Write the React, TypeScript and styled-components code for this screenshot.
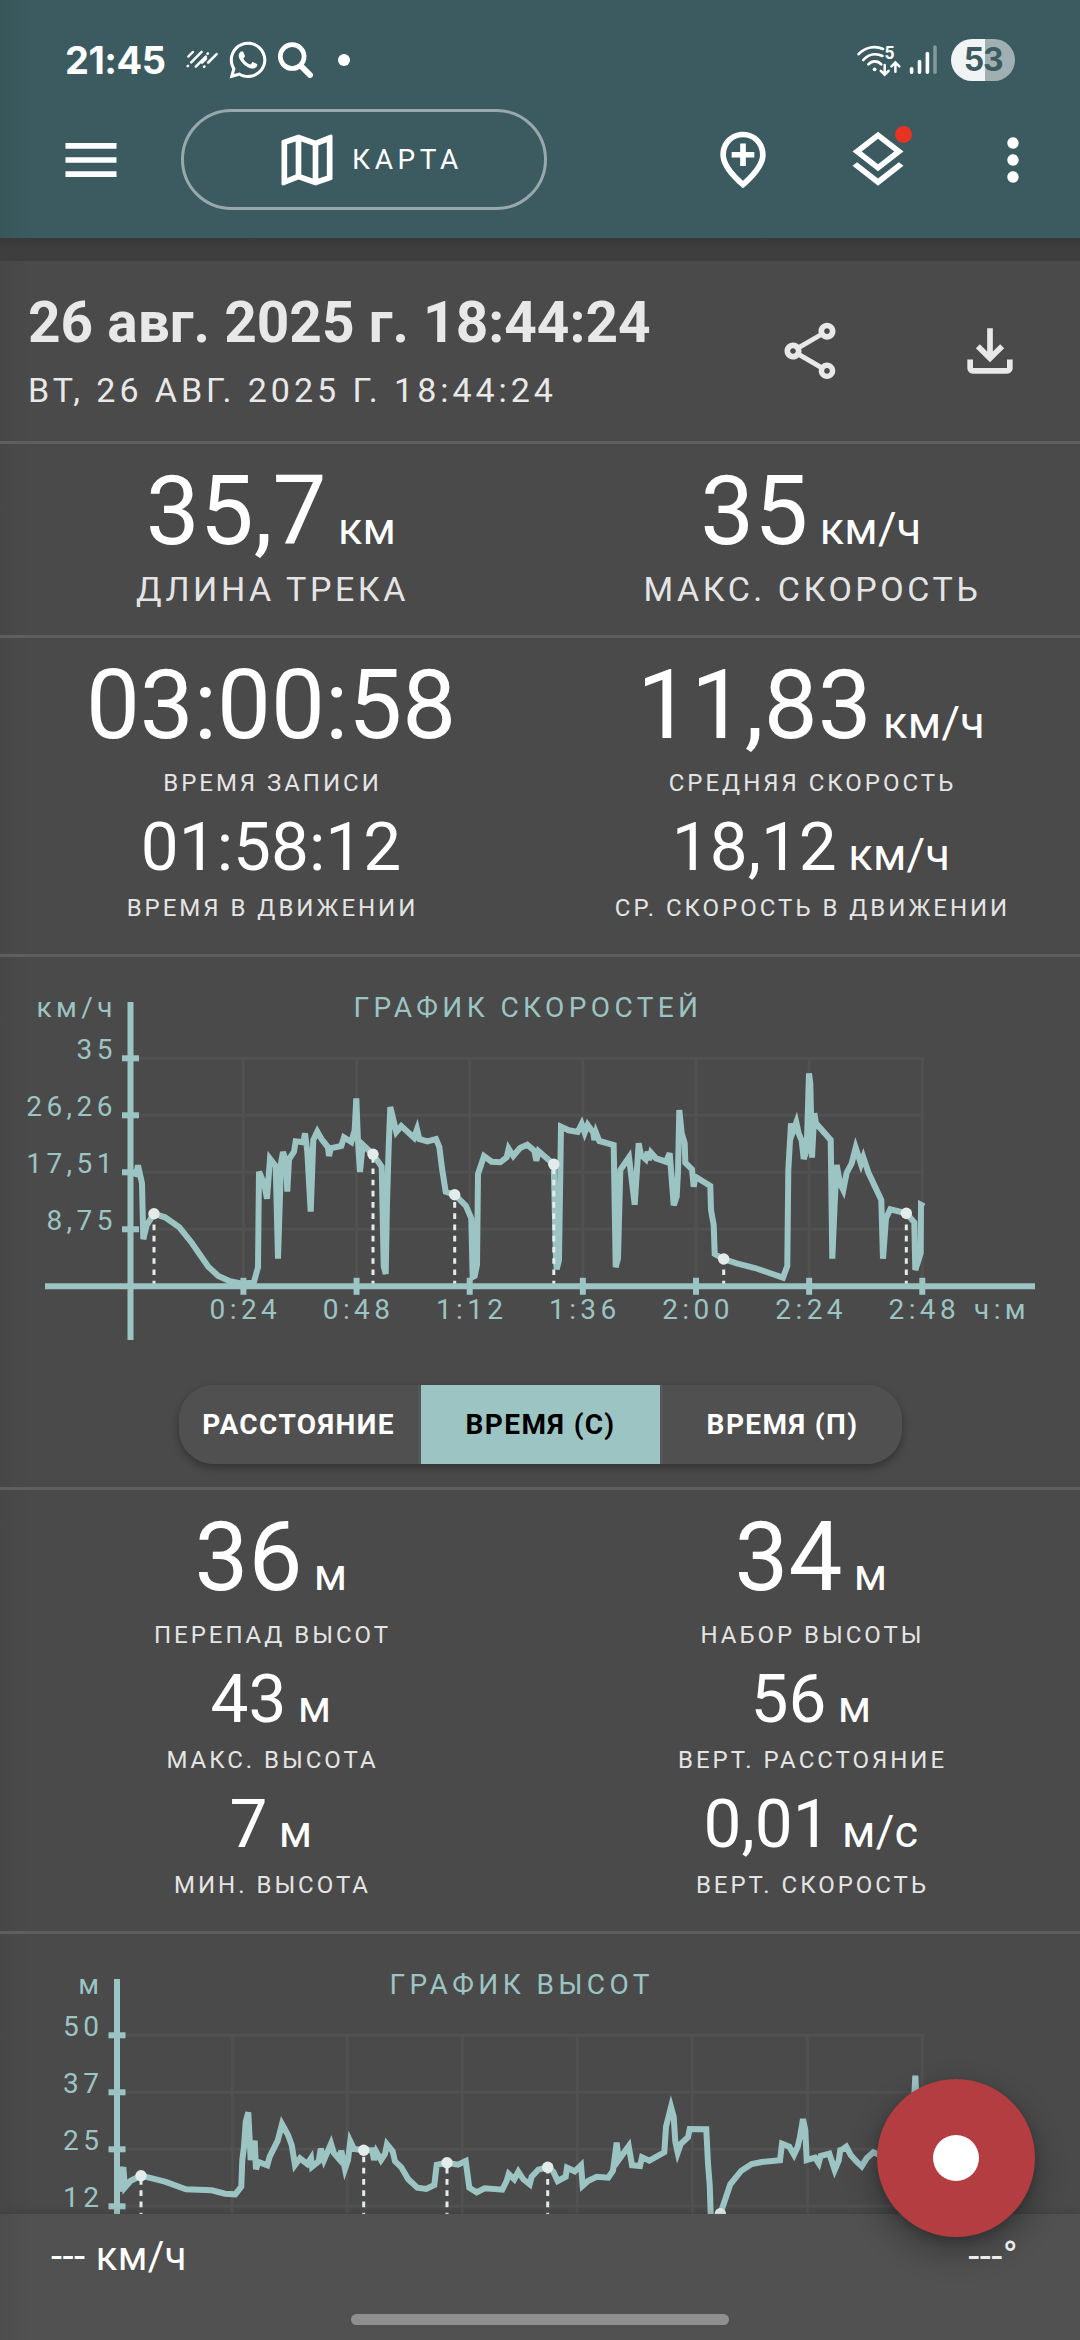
import React from "react";
import styled, { createGlobalStyle } from "styled-components";
import { FaWhatsapp } from "react-icons/fa";
import {
  MdMenu,
  MdMoreVert,
  MdOutlineFileDownload,
  MdOutlineLayers,
  MdOutlineMap,
  MdOutlineShare,
} from "react-icons/md";

const teal = "#9cc4c3";

const GlobalStyle = createGlobalStyle`
  *, *::before, *::after { box-sizing: border-box; }
  html, body { margin: 0; padding: 0; background: #4a4a4a; }
  body { font-family: Roboto, "Noto Sans", sans-serif; color: #fff; }
`;

const Screen = styled.div`
  position: relative;
  display: flex;
  flex-direction: column;
  width: 1080px;
  height: 2340px;
  overflow: hidden;
  background: #4a4a4a;
`;

/* ---------- header ---------- */

const Header = styled.header`
  flex: none;
  height: 238px;
  background: linear-gradient(90deg, #385659 0, #3b5b60 30px);
`;

const StatusBar = styled.div`
  display: flex;
  justify-content: space-between;
  align-items: center;
  height: 109px;
  padding: 11px 65px 0;
`;

const StatusGroup = styled.div`
  display: flex;
  align-items: center;
`;

const Clock = styled.span`
  margin-right: 20px;
  font: 700 38px/44px Inter, sans-serif;
  letter-spacing: -0.5px;
`;

const WhatsAppGlyph = styled(FaWhatsapp)`
  margin: 0 9px;
  font-size: 42px;
`;

const MoreDot = styled.span`
  width: 12px;
  height: 12px;
  margin-left: 24px;
  border-radius: 50%;
  background: #fff;
`;

const SignalSvg = styled.svg`
  margin: 0 14px 0 8px;
`;

const Battery = styled.span`
  display: flex;
  align-items: center;
  justify-content: center;
  width: 64px;
  height: 42px;
  border-radius: 21px;
  background: linear-gradient(90deg, #f0f4f5 53%, #9fafb2 53%);
  color: #3b5b60;
  font: 700 32px/42px Inter, sans-serif;
  letter-spacing: -1.4px;
`;

const Toolbar = styled.div`
  display: flex;
  align-items: center;
  height: 101px;
  padding: 0 33px 0 57px;
`;

const ToolbarActions = styled.div`
  display: flex;
  gap: 67px;
  margin-left: auto;
`;

const IconButton = styled.button`
  position: relative;
  display: flex;
  padding: 0;
  border: 0;
  background: none;
  color: inherit;
  font-size: 68px;
`;

const Badge = styled.span`
  position: absolute;
  top: 0;
  right: 0;
  width: 17px;
  height: 17px;
  border-radius: 50%;
  background: #e83323;
`;

const MapButton = styled.button`
  display: flex;
  align-items: center;
  justify-content: center;
  gap: 11px;
  width: 366px;
  height: 101px;
  margin-left: 56px;
  padding: 1px 0 0 8px;
  border: 3px solid #97a9ac;
  border-radius: 51px;
  background: none;
  color: #fff;
  font: 400 28px/34px Roboto, sans-serif;
  letter-spacing: 4.6px;

  svg {
    font-size: 68px;
  }
`;

/* ---------- content ---------- */

const Content = styled.main`
  flex: 1;
  min-height: 0;
  overflow: hidden;
  background: linear-gradient(90deg, #474747 0, #4a4a4a 30px);
`;

const TopShade = styled.div`
  height: 23px;
  background: linear-gradient(180deg, #393939, #3e3e3e 12px);
`;

const Section = styled.section<{ $height: number }>`
  height: ${(p) => p.$height}px;
  border-bottom: 3px solid #5f5f5f;
`;

const TrackHeader = styled(Section)`
  display: flex;
  align-items: center;
  padding: 1px 56px 0 28px;
  color: #e8e8e8;
`;

const TrackTitles = styled.div`
  flex: 1;
  padding-bottom: 1px;
`;

const TrackName = styled.h1`
  margin: 0 0 10px;
  font-size: 56.8px;
  font-weight: 700;
  line-height: 68px;
`;

const TrackDate = styled.div`
  font-size: 34px;
  line-height: 46px;
  letter-spacing: 3.95px;
`;

const TrackActions = styled.div`
  display: flex;
  gap: 112px;
  padding-bottom: 2px;
`;

const StatsGrid = styled(Section)`
  display: grid;
  grid-template-columns: 1fr 1fr;
  align-content: start;
  padding-top: 12px;
  text-align: center;
`;

const Stat = styled.div`
  display: flex;
  flex-direction: column;
  padding-left: 2px;
`;

const StatValue = styled.div<{ $large?: boolean }>`
  font-size: ${(p) => (p.$large ? 96 : 67.5)}px;
  line-height: ${(p) => (p.$large ? 110 : 93)}px;
  white-space: pre;
`;

const Unit = styled.span`
  font-size: 45px;
  line-height: 1;
  letter-spacing: 0.3px;
`;

const StatLabel = styled.div<{ $size: "large" | "small"; $gap: number }>`
  margin-top: ${(p) => p.$gap}px;
  padding-left: 3px;
  font-size: ${(p) => (p.$size === "large" ? 34 : 24)}px;
  line-height: ${(p) => (p.$size === "large" ? 46 : 34)}px;
  letter-spacing: ${(p) => (p.$size === "large" ? 3.55 : 2.98)}px;
  color: #e4e4e4;
  white-space: nowrap;
`;

const ChartSection = styled(Section)`
  display: flex;
  flex-direction: column;
  align-items: center;
`;

const ChartSvg = styled.svg`
  display: block;
  flex: none;

  text {
    fill: ${teal};
    font-family: Roboto, sans-serif;
    font-size: 28px;
    letter-spacing: 4.4px;
  }
`;

const Segmented = styled.div`
  display: flex;
  gap: 3px;
  width: 723px;
  height: 79px;
  margin-left: 1px;
  border-radius: 35px;
  overflow: hidden;
  background: #565656;
  box-shadow: 0 4px 9px rgba(0, 0, 0, 0.32);
`;

const Segment = styled.button<{ $active?: boolean }>`
  flex: 1 1 0;
  padding: 0;
  border: 0;
  background: ${(p) => (p.$active ? teal : "#505050")};
  color: ${(p) => (p.$active ? "#000" : "#fff")};
  font: 700 28px/34px Roboto, sans-serif;
  letter-spacing: 1.4px;
  white-space: nowrap;
`;

/* ---------- footer ---------- */

const BottomBar = styled.footer`
  display: flex;
  flex: none;
  flex-direction: column;
  justify-content: space-between;
  align-items: center;
  height: 126px;
  padding: 19px 0 15px;
  background: linear-gradient(90deg, #4d4d4d 0, #515151 30px);
  box-shadow: 0 -2px 6px rgba(0, 0, 0, 0.12);
`;

const Readouts = styled.div`
  position: relative;
  z-index: 2;
  display: flex;
  justify-content: space-between;
  width: 100%;
  padding: 0 62px 0 51px;
  font-size: 40px;
  line-height: 48px;
  letter-spacing: 0.4px;
`;

const Heading = styled.span`
  color: #ececec;
`;

const HomeIndicator = styled.div`
  width: 378px;
  height: 11px;
  border-radius: 6px;
  background: #8f8f8f;
`;

const RecordButton = styled.button`
  position: absolute;
  right: 45px;
  bottom: 103px;
  z-index: 1;
  display: flex;
  align-items: center;
  justify-content: center;
  width: 158px;
  height: 158px;
  border: 0;
  border-radius: 50%;
  background: #b33d41;
  box-shadow: 0 14px 32px rgba(0, 0, 0, 0.32), 0 3px 8px rgba(0, 0, 0, 0.16);
`;

const RecordDot = styled.span`
  width: 46px;
  height: 46px;
  border-radius: 50%;
  background: #fff;
`;

/* ---------- drawings ---------- */

const StripesIcon = () => (
  <svg width="32" height="20" viewBox="0 0 32 20" fill="none" stroke="#fff" strokeWidth="2.5" strokeLinecap="round">
    <path d="M2.4 6.5 6.8 2M5.2 12.4 15.6 1.9M1.7 16.1l.3-.3M9.8 16.6 19.8 6.6M21.5 3.8l.3-.3M16 12.6l4-4M18.1 16.8l.3-.3M22.2 12.5l8.4-8.4" />
  </svg>
);

const SearchIcon = () => (
  <svg width="36" height="36" viewBox="0 0 36 36" fill="none" stroke="#fff">
    <circle cx="14.2" cy="14.6" r="11.9" strokeWidth="4.7" />
    <path d="M23.5 24.5 32 33" strokeWidth="6" strokeLinecap="round" />
  </svg>
);

const WifiIcon = () => (
  <svg width="44" height="41" viewBox="0 -5 44 41" fill="none" stroke="#fff" strokeWidth="2.6" strokeLinecap="round">
    <path d="M1.6 9.2C8.5 1.8 18.5.6 26 4" />
    <path d="M6.3 15C11.7 9 19 8 25.5 11" />
    <path d="M11.3 19.4c3.8-4 9.3-4 13 0" />
    <circle cx="17.6" cy="24.3" r="1.9" fill="#fff" stroke="none" />
    <path d="M27.7 20v9M23.8 25.8l3.9 3.9 3.9-3.9M38.4 26.8v-9M34.5 21.3l3.9-3.9 3.9 3.9" strokeWidth="2.5" />
    <text x="27.6" y="14.2" fill="#fff" stroke="none" fontFamily="Roboto, sans-serif" fontWeight="700" fontSize="17.5">
      5
    </text>
  </svg>
);

const SignalIcon = () => (
  <SignalSvg width="28" height="30" viewBox="0 0 28 30" stroke="#fff" strokeWidth="3.6" strokeLinecap="round">
    <path d="M2.6 27.2v-3.4M10.5 27.2V16.6M18.4 27.2V8.6" />
    <path d="M26 27.2V2" stroke="#83989b" />
  </SignalSvg>
);

const AddPlaceIcon = () => (
  <svg width="1em" height="1em" viewBox="0 0 24 24" fill="currentColor">
    <path d="M12 4C8.65 4 6 6.57 6 10.2c0 2.34 1.95 5.44 6 9.14 4.05-3.7 6-6.8 6-9.14C18 6.57 15.35 4 12 4zm0-2c4.2 0 8 3.22 8 8.2 0 3.32-2.67 7.25-8 11.8-5.33-4.55-8-8.48-8-11.8C4 5.22 7.8 2 12 2z" />
    <path d="M13 6h-2v3H8v2h3v3h2v-3h3V9h-3z" transform="translate(0 .15)" />
  </svg>
);

/* ---------- charts ---------- */

type Point = [number, number];

interface ChartProps {
  title: string;
  titleX: number;
  unit: string;
  top: number;
  height: number;
  axisX: number;
  axisTop: number;
  axisY: number;
  yTicks: [string, number][];
  xStep: number;
  xTickCount: number;
  xLabels?: string[];
  xUnit?: string;
  series: Point[];
  markers: Point[];
}

const GRID_RIGHT = 922.3;

function Chart(p: ChartProps) {
  const xs = Array.from({ length: p.xTickCount }, (_, i) => GRID_RIGHT - (p.xTickCount - 1 - i) * p.xStep);
  const labelRight = p.axisX - 13.7;
  return (
    <ChartSvg width={1080} height={p.height} viewBox={`0 ${p.top} 1080 ${p.height}`}>
      <g stroke="#515151" strokeWidth={3}>
        {p.yTicks.map(([label, y]) => (
          <line key={label} x1={p.axisX} x2={GRID_RIGHT + 1.5} y1={y} y2={y} />
        ))}
        {xs.map((x) => (
          <line key={x} x1={x} x2={x} y1={p.yTicks[0][1]} y2={p.axisY} />
        ))}
      </g>
      <polyline points={p.series.map((pt) => pt.join(",")).join(" ")} fill="none" stroke={teal} strokeWidth={6} />
      <g stroke="#e3ecea" strokeWidth={3} strokeDasharray="5.6 5.63">
        {p.markers.map(([x, y]) => (
          <line key={x} x1={x} x2={x} y1={p.axisY} y2={y} />
        ))}
      </g>
      <g stroke={teal} strokeWidth={6}>
        <line x1={p.axisX} x2={p.axisX} y1={p.axisTop} y2={p.axisY + 53.7} />
        <line x1={45} x2={1035} y1={p.axisY} y2={p.axisY} />
        {p.yTicks.map(([label, y]) => (
          <line key={label} x1={p.axisX - 8.5} x2={p.axisX + 8.5} y1={y} y2={y} />
        ))}
        {xs.map((x) => (
          <line key={x} x1={x} x2={x} y1={p.axisY - 8.5} y2={p.axisY + 8.5} />
        ))}
      </g>
      {p.markers.map(([x, y]) => (
        <circle key={x} cx={x} cy={y} r={5.7} fill="#e3ecea" />
      ))}
      <text x={p.titleX} y={p.axisTop + 15} textAnchor="middle">
        {p.title}
      </text>
      <text x={labelRight} y={p.axisTop + 15} textAnchor="end">
        {p.unit}
      </text>
      {p.yTicks.map(([label, y]) => (
        <text key={label} x={labelRight} y={y + 1} textAnchor="end">
          {label}
        </text>
      ))}
      {p.xLabels?.map((label, i) => (
        <text key={label} x={xs[i] + 2} y={p.axisY + 32.7} textAnchor="middle">
          {label}
        </text>
      ))}
      {p.xUnit && (
        <text x={974} y={p.axisY + 32.7}>
          {p.xUnit}
        </text>
      )}
    </ChartSvg>
  );
}

/* Samples are stored in thirds of a pixel, relative to an origin. */
const scale = (ox: number, oy: number, pts: Point[]): Point[] =>
  pts.map(([x, y]) => [+(ox + x / 3).toFixed(1), +(oy + y / 3).toFixed(1)]);

const speedSeries: Point[] = [
  ...scale(0, 970, [
    [392, 608], [408, 612], [414, 586], [426, 640], [430, 808], [440, 765], [462, 731], [495, 742], [538, 772],
    [575, 818], [625, 890], [655, 918], [690, 934], [730, 942], [762, 935], [774, 892], [777, 605], [792, 640],
    [801, 686], [810, 566], [827, 588], [834, 866], [843, 580], [849, 546], [858, 575], [862, 665], [867, 568],
    [882, 545], [887, 514], [910, 517], [915, 490], [922, 545], [932, 725], [940, 510], [952, 485], [965, 508],
    [984, 532], [987, 558], [992, 535], [1024, 528], [1032, 502], [1054, 516], [1064, 480], [1069, 385],
    [1074, 515], [1080, 606], [1088, 524], [1119, 553], [1145, 590], [1151, 888], [1157, 912], [1161, 700],
    [1166, 530], [1171, 411],
  ]),
  ...scale(340, 970, [
    [169, 486], [184, 468], [222, 503], [231, 478], [238, 507], [262, 514], [288, 507], [298, 530], [306, 595],
    [317, 665], [344, 674], [378, 708], [394, 745], [398, 921], [404, 918], [411, 885], [414, 612], [432, 558],
    [455, 575], [481, 577], [500, 562], [506, 536], [520, 558], [540, 534], [562, 524], [583, 542], [589, 572],
    [596, 544], [641, 583], [648, 870], [650, 898], [657, 870], [663, 470], [686, 481], [713, 486], [725, 462],
    [734, 488], [743, 465], [760, 488], [763, 510], [768, 488], [778, 513], [821, 525], [827, 892], [834, 865],
    [841, 600], [867, 562], [884, 704], [896, 520], [903, 555], [917, 568], [923, 545], [927, 570], [933, 548],
    [948, 565], [978, 575], [989, 550], [1001, 706], [1010, 680], [1014, 605], [1018, 420], [1025, 490],
    [1034, 520], [1036, 578], [1056, 598], [1061, 650], [1066, 620], [1111, 648], [1113, 720], [1121, 765],
    [1124, 852], [1151, 867],
  ]),
  ...scale(680, 970, [
    [170, 880], [225, 894], [309, 923], [322, 888], [325, 600], [333, 460], [338, 487], [349, 457], [356, 490],
    [365, 512], [371, 567], [380, 540], [387, 310], [391, 340], [396, 563], [403, 430], [408, 460], [452, 510],
    [457, 866], [464, 700], [470, 585], [480, 640], [490, 660], [500, 608], [515, 580], [527, 533], [543, 582],
    [550, 562], [565, 607], [604, 690], [609, 866], [618, 745], [631, 718], [679, 730], [703, 757], [706, 900],
    [722, 850], [723, 704], [732, 709],
  ]),
];

const altitudeSeries: Point[] = [
  ...scale(0, 1930, [
    [357, 785], [364, 730], [370, 712], [375, 772], [392, 752], [423, 737], [495, 755], [558, 778], [635, 781],
    [675, 791], [706, 793], [724, 770], [727, 690], [732, 650], [737, 575], [745, 547], [752, 690], [764, 632],
    [768, 718], [775, 696], [802, 706], [809, 680], [833, 632], [846, 582], [864, 615], [875, 645], [885, 705],
    [900, 685], [922, 702], [933, 685], [936, 710], [956, 694], [962, 656], [972, 690], [993, 641], [1001, 668],
    [1018, 688], [1024, 662], [1035, 717], [1044, 690], [1051, 634], [1062, 657], [1091, 661], [1117, 661],
    [1122, 690], [1129, 665], [1143, 690], [1155, 672], [1161, 643], [1178, 664],
  ]),
  ...scale(340, 1930, [
    [165, 694], [184, 712], [205, 748], [232, 773], [259, 777], [283, 765], [290, 704], [321, 698], [354, 704],
    [377, 693], [388, 773], [410, 787], [434, 775], [487, 779], [500, 752], [506, 732], [523, 748], [535, 725],
    [550, 748], [569, 763], [575, 740], [595, 719], [623, 712], [640, 725], [653, 753], [677, 740], [681, 713],
    [704, 724], [723, 706], [728, 767], [745, 752], [770, 740], [805, 743], [819, 722], [830, 638], [836, 690],
    [866, 648], [876, 706], [900, 708], [906, 682], [928, 692], [973, 667], [978, 590], [993, 531], [1001, 560],
    [1006, 635], [1013, 668], [1022, 642], [1044, 622], [1049, 597], [1099, 598], [1104, 700], [1109, 765],
    [1112, 852], [1118, 905], [1141, 852], [1171, 763],
  ]),
  ...scale(680, 1930, [
    [184, 722], [215, 702], [245, 696], [300, 691], [306, 641], [328, 650], [342, 674], [353, 650], [360, 620],
    [369, 567], [376, 600], [380, 690], [405, 683], [416, 700], [422, 678], [448, 671], [464, 720], [476, 692],
    [481, 660], [488, 658], [499, 650], [512, 675], [530, 695], [545, 709], [560, 685], [580, 667], [610, 680],
    [690, 690], [700, 560], [706, 437], [712, 560],
  ]),
];

interface StatItem {
  value: string;
  unit?: string;
  label: string;
  large?: boolean;
}

function Stats({ items, height, bigLabels }: { items: StatItem[]; height: number; bigLabels?: boolean }) {
  const gapFor = (s: StatItem) => {
    if (bigLabels) return 0;
    return s.large ? 6 : -2;
  };
  return (
    <StatsGrid $height={height}>
      {items.map((s) => (
        <Stat key={s.label}>
          <StatValue $large={s.large}>
            {s.value}
            {s.unit && <Unit> {s.unit}</Unit>}
          </StatValue>
          <StatLabel $size={bigLabels ? "large" : "small"} $gap={gapFor(s)}>
            {s.label}
          </StatLabel>
        </Stat>
      ))}
    </StatsGrid>
  );
}

export default function App() {
  return (
    <Screen>
      <GlobalStyle />
      <Header>
        <StatusBar>
          <StatusGroup>
            <Clock>21:45</Clock>
            <StripesIcon />
            <WhatsAppGlyph />
            <SearchIcon />
            <MoreDot />
          </StatusGroup>
          <StatusGroup>
            <WifiIcon />
            <SignalIcon />
            <Battery>53</Battery>
          </StatusGroup>
        </StatusBar>
        <Toolbar>
          <IconButton aria-label="Меню">
            <MdMenu />
          </IconButton>
          <MapButton>
            <MdOutlineMap />
            КАРТА
          </MapButton>
          <ToolbarActions>
            <IconButton>
              <AddPlaceIcon />
            </IconButton>
            <IconButton>
              <MdOutlineLayers />
              <Badge />
            </IconButton>
            <IconButton>
              <MdMoreVert />
            </IconButton>
          </ToolbarActions>
        </Toolbar>
      </Header>

      <Content>
        <TopShade />
        <TrackHeader $height={183}>
          <TrackTitles>
            <TrackName>26 авг. 2025 г. 18:44:24</TrackName>
            <TrackDate>ВТ, 26 АВГ. 2025 Г. 18:44:24</TrackDate>
          </TrackTitles>
          <TrackActions>
            <IconButton>
              <MdOutlineShare />
            </IconButton>
            <IconButton>
              <MdOutlineFileDownload />
            </IconButton>
          </TrackActions>
        </TrackHeader>

        <Stats
          height={194}
          bigLabels
          items={[
            { value: "35,7", unit: "км", label: "ДЛИНА ТРЕКА", large: true },
            { value: "35", unit: "км/ч", label: "МАКС. СКОРОСТЬ", large: true },
          ]}
        />
        <Stats
          height={319}
          items={[
            { value: "03:00:58", label: "ВРЕМЯ ЗАПИСИ", large: true },
            { value: "11,83", unit: "км/ч", label: "СРЕДНЯЯ СКОРОСТЬ", large: true },
            { value: "01:58:12", label: "ВРЕМЯ В ДВИЖЕНИИ" },
            { value: "18,12", unit: "км/ч", label: "СР. СКОРОСТЬ В ДВИЖЕНИИ" },
          ]}
        />

        <ChartSection $height={533}>
          <Chart
            title="ГРАФИК СКОРОСТЕЙ"
            titleX={528}
            unit="км/ч"
            top={957}
            height={428}
            axisX={130.5}
            axisTop={1002}
            axisY={1286.3}
            yTicks={[["35", 1058.3], ["26,26", 1115.3], ["17,51", 1172.3], ["8,75", 1229.3]]}
            xStep={113.15}
            xTickCount={7}
            xLabels={["0:24", "0:48", "1:12", "1:36", "2:00", "2:24", "2:48"]}
            xUnit="ч:м"
            series={speedSeries}
            markers={[[154, 1213.7], [373, 1154.3], [454.7, 1194.7], [553.8, 1164.3], [723.7, 1259], [906.3, 1213.3]]}
          />
          <Segmented>
            <Segment>РАССТОЯНИЕ</Segment>
            <Segment $active>ВРЕМЯ (С)</Segment>
            <Segment>ВРЕМЯ (П)</Segment>
          </Segmented>
        </ChartSection>

        <Stats
          height={444}
          items={[
            { value: "36", unit: "м", label: "ПЕРЕПАД ВЫСОТ", large: true },
            { value: "34", unit: "м", label: "НАБОР ВЫСОТЫ", large: true },
            { value: "43", unit: "м", label: "МАКС. ВЫСОТА" },
            { value: "56", unit: "м", label: "ВЕРТ. РАССТОЯНИЕ" },
            { value: "7", unit: "м", label: "МИН. ВЫСОТА" },
            { value: "0,01", unit: "м/с", label: "ВЕРТ. СКОРОСТЬ" },
          ]}
        />

        <Chart
          title="ГРАФИК ВЫСОТ"
          titleX={521.7}
          unit="м"
          top={1934}
          height={280}
          axisX={117}
          axisTop={1979}
          axisY={2263.3}
          yTicks={[["50", 2035.3], ["37", 2092.3], ["25", 2149.3], ["12", 2206.3]]}
          xStep={115}
          xTickCount={7}
          series={altitudeSeries}
          markers={[[141, 2175.7], [363.7, 2150.3], [447, 2162.7], [547.7, 2167.3], [720.3, 2213.7]]}
        />
      </Content>

      <BottomBar>
        <Readouts>
          <span>--- км/ч</span>
          <Heading>---°</Heading>
        </Readouts>
        <HomeIndicator />
      </BottomBar>

      <RecordButton aria-label="Запись">
        <RecordDot />
      </RecordButton>
    </Screen>
  );
}
